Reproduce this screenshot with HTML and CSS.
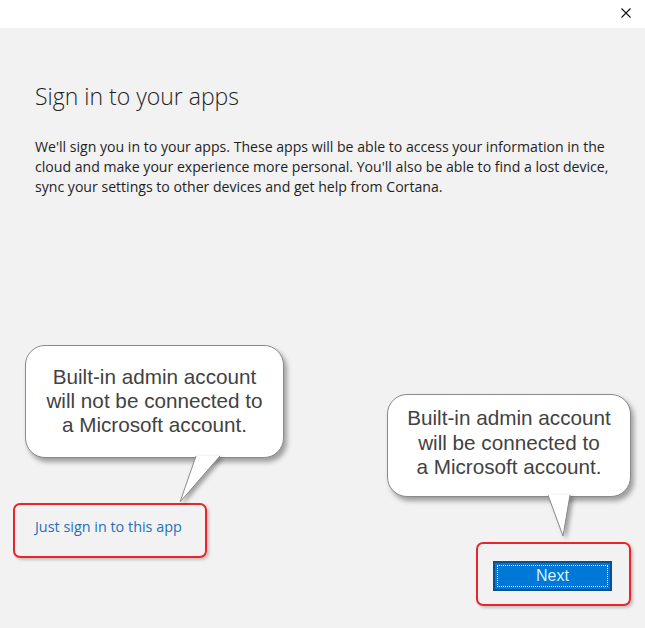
FILE: index.html
```html
<!DOCTYPE html>
<html lang="en">
<head>
    <meta charset="UTF-8">
    <meta name="viewport" content="width=device-width, initial-scale=1.0">
    <title>Sign in to your apps</title>
    <link rel="stylesheet" href="styles.css">
</head>
<body>

    <div class="titlebar">
        <button class="close" aria-label="Close">
            <svg width="10" height="10" viewBox="0 0 10 10">
                <path d="M0.5 0.5 L9.5 9.5 M9.5 0.5 L0.5 9.5" stroke="#111" stroke-width="1.1" fill="none"/>
            </svg>
        </button>
    </div>

    <div class="page">
        <div class="content">
            <h1 class="heading">Sign in to your apps</h1>
            <p class="intro">We'll sign you in to your apps. These apps will be able to access your information in the cloud and make your experience more personal. You'll also be able to find a lost device, sync your settings to other devices and get help from Cortana.</p>
        </div>

        <div class="footer">
            <div class="mark mark-link">
                <div class="callout callout-left">
                    Built-in admin account<br>will not be connected to<br>a Microsoft account.
                    <svg class="tail tail-left" width="42" height="48" viewBox="0 0 42 48">
                        <polygon points="16,0 40,0 0,46" fill="#fff"/>
                        <polyline points="16,0 0,46 40,0" fill="none" stroke="#8a8a8a" stroke-width="1"/>
                    </svg>
                </div>
                <a class="link" href="#">Just sign in to this app</a>
            </div>

            <div class="mark mark-next">
                <div class="callout callout-right">
                    Built-in admin account<br>will be connected to<br>a Microsoft account.
                    <svg class="tail tail-right" width="24" height="44" viewBox="0 0 24 44">
                        <polygon points="0,0 22,0 15,41" fill="#fff"/>
                        <polyline points="0,0 15,41 22,0" fill="none" stroke="#8a8a8a" stroke-width="1"/>
                    </svg>
                </div>
                <button class="next">Next</button>
            </div>
        </div>
    </div>

</body>
</html>
```

FILE: styles.css
```css
html, body {
    margin: 0;
    height: 100%;
}
body {
    font-family: "Open Sans", "Noto Sans", sans-serif;
    background-color: #f2f2f2;
    color: #1f1f1f;
    display: flex;
    flex-direction: column;
}
.titlebar {
    height: 28px;
    background-color: #fff;
    display: flex;
    justify-content: flex-end;
    align-items: flex-start;
}
.close {
    width: 34px;
    height: 26px;
    border: none;
    background: none;
    padding: 0;
    display: flex;
    align-items: center;
    justify-content: center;
    margin-right: 2px;
}
.page {
    flex: 1;
    display: flex;
    flex-direction: column;
}
.content {
    padding: 52px 0 0 35px;
}
.heading {
    font-weight: 300;
    font-size: 23px;
    line-height: 32px;
    margin: 0 0 25px 0;
}
.intro {
    font-size: 14.1px;
    line-height: 20px;
    max-width: 600px;
    margin: 0;
}
.footer {
    margin-top: auto;
    padding: 0 14px 22px 13px;
    display: flex;
    justify-content: space-between;
    align-items: flex-start;
}
.mark {
    position: relative;
    border: 2px solid #e5262b;
    border-radius: 7px;
    box-shadow: 2px 2px 3px rgba(0, 0, 0, 0.2);
    box-sizing: border-box;
}
.mark-link {
    width: 194px;
    height: 55px;
    padding: 10px 0 0 20px;
}
.mark-next {
    width: 155px;
    height: 64px;
    margin-top: 39px;
    padding: 17px 17px 0 15px;
}
.link {
    font-size: 14.4px;
    line-height: 20px;
    color: #2470b8;
    text-decoration: none;
}
.next {
    width: 119px;
    height: 30px;
    background-color: #0078d7;
    border: 2px solid #0d4f8b;
    outline: 1px dotted #fff;
    outline-offset: -5px;
    color: #d6f3ff;
    font-family: "Liberation Sans", Arial, sans-serif;
    font-size: 16px;
    padding: 0;
}
.callout {
    position: absolute;
    box-sizing: border-box;
    background-color: #fff;
    border: 1px solid #8a8a8a;
    border-radius: 20px;
    box-shadow: 3px 4px 5px rgba(0, 0, 0, 0.35);
    font-family: "Liberation Sans", Arial, sans-serif;
    font-size: 20.7px;
    line-height: 24px;
    color: #424242;
    text-align: center;
}
.callout-left {
    left: 10px;
    top: -160px;
    width: 259px;
    height: 113px;
    padding-top: 19px;
}
.callout-right {
    left: -91px;
    top: -150px;
    width: 244px;
    height: 103px;
    padding-top: 11px;
    line-height: 24.5px;
}
.tail {
    position: absolute;
    filter: drop-shadow(3px 2px 2px rgba(0, 0, 0, 0.35));
}
.tail-left {
    left: 154px;
    top: 110px;
}
.tail-right {
    left: 160px;
    top: 100px;
}
```
